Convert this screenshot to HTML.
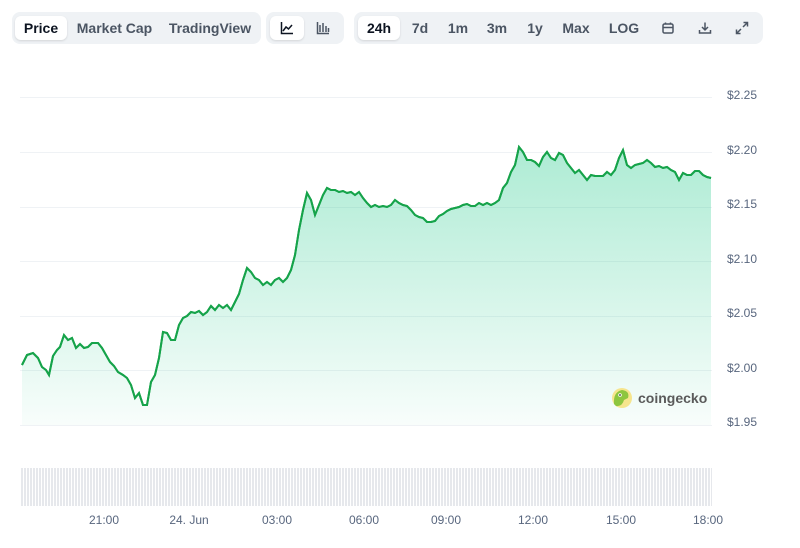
<!DOCTYPE html>
<html><head><style>
body{margin:0;width:800px;height:548px;background:#fff;font-family:"Liberation Sans",sans-serif;position:relative;overflow:hidden}
.grp{position:absolute;top:12px;height:32px;background:#eff2f5;border-radius:8px}
.b{position:absolute;top:4px;height:24px;line-height:24px;font-size:14px;font-weight:bold;color:#4b5563;text-align:center}
.on{background:#fff;border-radius:6px;color:#0d1421;box-shadow:0 1px 2px rgba(0,0,0,.12)}
.yl{position:absolute;left:727px;font-size:12px;color:#58667e}
.xl{position:absolute;top:513px;font-size:12px;color:#58667e;transform:translateX(-50%)}
</style></head><body>
<div class="grp" style="left:12px;width:249px">
<div class="b on" style="left:3px;width:52px">Price</div>
<div class="b" style="left:60px;width:85px">Market Cap</div>
<div class="b" style="left:152px;width:92px">TradingView</div>
</div>
<div class="grp" style="left:266px;width:78px">
<div class="b on" style="left:4px;width:34px"><svg width="14" height="14" viewBox="0 0 14 14" style="margin-top:5px"><path d="M1.5 1v11.5h11.5M3 10l3-4 2.5 2 3.5-4" fill="none" stroke="#0d1421" stroke-width="1.5"/></svg></div>
<div class="b" style="left:40px;width:34px"><svg width="14" height="14" viewBox="0 0 14 14" style="margin-top:5px"><path d="M1.5 1v11.5h11.5M4 11V4M7 11V2M10 11V5M12.5 11V7" fill="none" stroke="#4b5563" stroke-width="1.5"/></svg></div>
</div>
<div class="grp" style="left:354px;width:409px">
<div class="b on" style="left:4px;width:42px">24h</div>
<div class="b" style="left:50px;width:32px">7d</div>
<div class="b" style="left:88px;width:32px">1m</div>
<div class="b" style="left:127px;width:32px">3m</div>
<div class="b" style="left:166px;width:30px">1y</div>
<div class="b" style="left:202px;width:40px">Max</div>
<div class="b" style="left:250px;width:40px">LOG</div>
<div class="b" style="left:302px;width:24px"><svg width="14" height="14" viewBox="0 0 14 14" style="margin-top:5px"><rect x="2" y="3" width="10" height="9" rx="1.5" fill="none" stroke="#4b5563" stroke-width="1.5"/><path d="M2 6.5h10M4.5 1.5v2M9.5 1.5v2" stroke="#4b5563" stroke-width="1.5"/></svg></div>
<div class="b" style="left:339px;width:24px"><svg width="14" height="14" viewBox="0 0 14 14" style="margin-top:5px"><path d="M7 1.5v7M4 6l3 3 3-3M1.5 9v3h11V9" fill="none" stroke="#4b5563" stroke-width="1.5"/></svg></div>
<div class="b" style="left:376px;width:24px"><svg width="14" height="14" viewBox="0 0 14 14" style="margin-top:5px"><path d="M8.5 1.5h4v4M12.5 1.5l-4.5 4.5M5.5 12.5h-4v-4M1.5 12.5l4.5-4.5" fill="none" stroke="#4b5563" stroke-width="1.5"/></svg></div>
</div>
<svg width="800" height="548" style="position:absolute;left:0;top:0">
<defs><linearGradient id="g" x1="0" y1="0" x2="0" y2="1"><stop offset="0" stop-color="#16c784" stop-opacity=".35"/><stop offset="1" stop-color="#16c784" stop-opacity=".03"/></linearGradient>
<pattern id="v" width="3" height="50" patternUnits="userSpaceOnUse"><rect width="2" height="50" fill="#e6e8ec"/></pattern></defs>
<g stroke="#eff2f5" stroke-width="1"><path d="M20 97.5H712M20 152.5H712M20 207.5H712M20 261.5H712M20 316.5H712M20 370.5H712M20 425.5H712"/></g>
<rect x="21" y="468" width="691" height="38" fill="url(#v)"/>
<path id="p" d="M22,365L27,355L33,353L38,358L42,367L46,370L49,375L53,356L57,350L60,347L64,335L68,340L72,338L76,348L80,344L84,348L88,347L92,343L98,343L102,348L106,355L110,362L114,366L118,372L123,375L127,378L131,385L135,398L139,393L143,405L147,405L151,382L155,375L159,358L163,332L167,333L171,340L175,340L179,325L183,318L187,316L191,312L195,313L199,311L203,315L207,312L211,306L215,310L219,305L223,308L227,305L231,310L235,302L239,294L243,280L247,268L251,272L255,278L259,280L263,285L267,282L271,285L275,280L279,278L283,282L287,278L291,270L295,255L299,230L303,210L307,193L311,200L315,215L319,205L323,195L327,188L331,190L335,190L339,192L343,191L347,193L351,192L355,195L359,192L363,198L367,203L371,207L375,205L379,207L383,206L387,207L391,205L395,200L399,203L403,205L407,206L411,210L415,215L419,217L423,218L427,222L431,222L435,221L439,216L443,214L447,211L451,209L455,208L459,207L463,205L467,204L471,206L475,206L479,203L483,205L487,203L491,205L495,203L499,200L503,188L507,183L511,172L515,165L519,147L523,152L527,160L531,160L535,162L539,166L543,157L547,152L551,158L555,160L559,153L563,155L567,163L571,168L575,173L579,170L583,175L587,180L591,175L595,176L599,176L603,176L607,172L611,175L615,170L619,158L623,150L627,165L631,168L635,165L639,164L643,163L647,160L651,163L655,167L659,166L663,168L667,167L671,170L675,172L679,180L683,173L687,175L691,175L695,171L699,171L703,175L707,177L711,178" fill="none" stroke="#16a34a" stroke-width="2"/>
<path d="M22,365L27,355L33,353L38,358L42,367L46,370L49,375L53,356L57,350L60,347L64,335L68,340L72,338L76,348L80,344L84,348L88,347L92,343L98,343L102,348L106,355L110,362L114,366L118,372L123,375L127,378L131,385L135,398L139,393L143,405L147,405L151,382L155,375L159,358L163,332L167,333L171,340L175,340L179,325L183,318L187,316L191,312L195,313L199,311L203,315L207,312L211,306L215,310L219,305L223,308L227,305L231,310L235,302L239,294L243,280L247,268L251,272L255,278L259,280L263,285L267,282L271,285L275,280L279,278L283,282L287,278L291,270L295,255L299,230L303,210L307,193L311,200L315,215L319,205L323,195L327,188L331,190L335,190L339,192L343,191L347,193L351,192L355,195L359,192L363,198L367,203L371,207L375,205L379,207L383,206L387,207L391,205L395,200L399,203L403,205L407,206L411,210L415,215L419,217L423,218L427,222L431,222L435,221L439,216L443,214L447,211L451,209L455,208L459,207L463,205L467,204L471,206L475,206L479,203L483,205L487,203L491,205L495,203L499,200L503,188L507,183L511,172L515,165L519,147L523,152L527,160L531,160L535,162L539,166L543,157L547,152L551,158L555,160L559,153L563,155L567,163L571,168L575,173L579,170L583,175L587,180L591,175L595,176L599,176L603,176L607,172L611,175L615,170L619,158L623,150L627,165L631,168L635,165L639,164L643,163L647,160L651,163L655,167L659,166L663,168L667,167L671,170L675,172L679,180L683,173L687,175L691,175L695,171L699,171L703,175L707,177L711,178L711,425L22,425Z" fill="url(#g)" stroke="none"/>
<use href="#p"/>
<circle cx="622" cy="398" r="10" fill="#f6e58d"/>
<path d="M614,404 Q613,392 622,390 Q630,391 628,398 L624,400 Q622,407 616,406Z" fill="#8dc63f"/>
<circle cx="620" cy="395" r="1.8" fill="#fff"/><circle cx="620" cy="395" r="0.9" fill="#333"/>
<text x="638" y="403" font-family="Liberation Sans" font-weight="bold" font-size="14" fill="#5a5a5a">coingecko</text>
</svg>
<div class="yl" style="top:88px">$2.25</div>
<div class="yl" style="top:143px">$2.20</div>
<div class="yl" style="top:197px">$2.15</div>
<div class="yl" style="top:252px">$2.10</div>
<div class="yl" style="top:306px">$2.05</div>
<div class="yl" style="top:361px">$2.00</div>
<div class="yl" style="top:415px">$1.95</div>
<div class="xl" style="left:104px">21:00</div>
<div class="xl" style="left:189px">24. Jun</div>
<div class="xl" style="left:277px">03:00</div>
<div class="xl" style="left:364px">06:00</div>
<div class="xl" style="left:446px">09:00</div>
<div class="xl" style="left:533px">12:00</div>
<div class="xl" style="left:621px">15:00</div>
<div class="xl" style="left:708px">18:00</div>
</body></html>
